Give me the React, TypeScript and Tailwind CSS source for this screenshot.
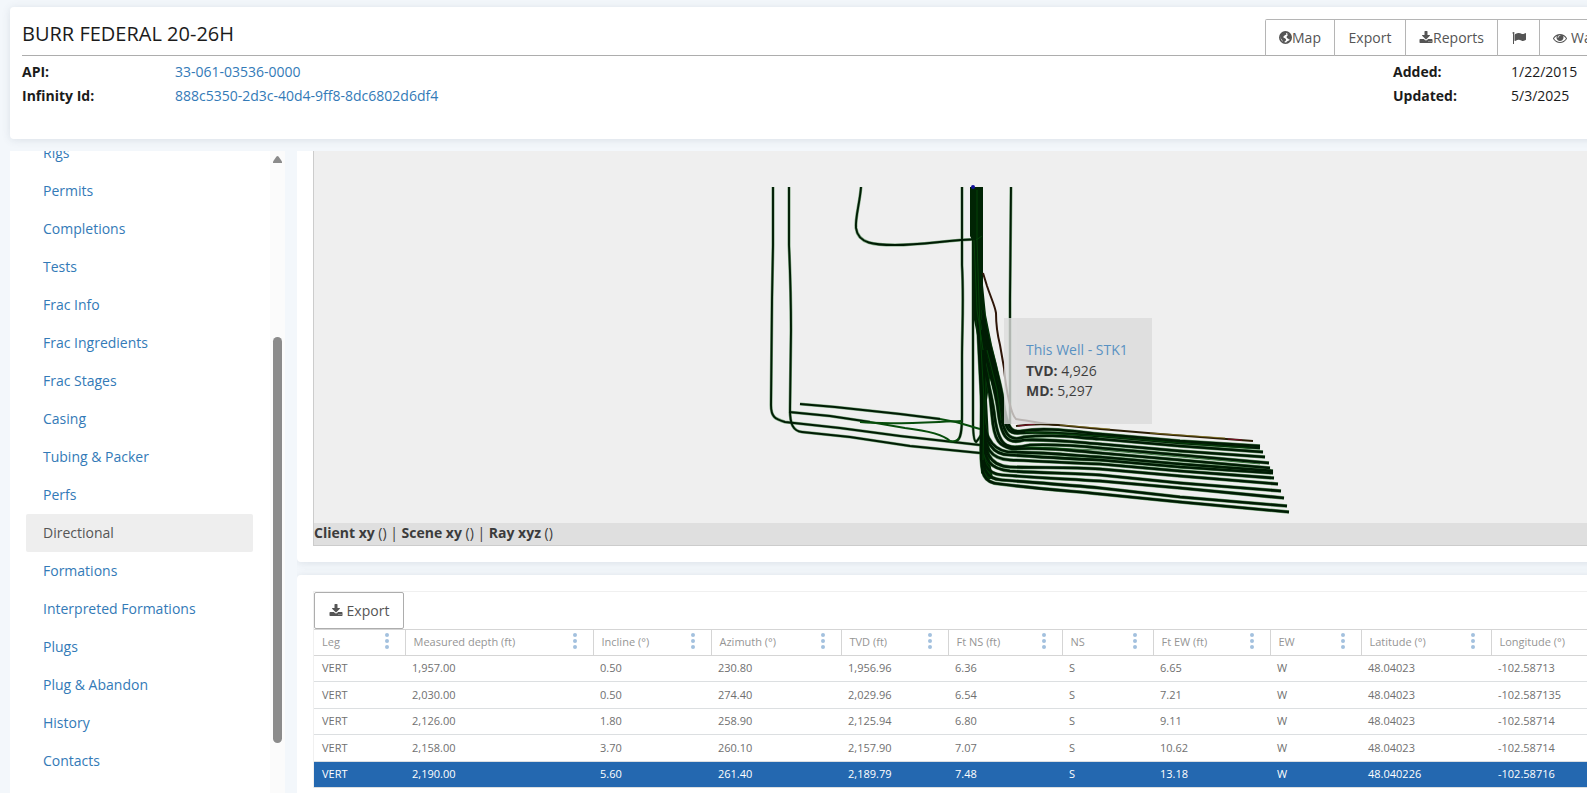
import type { ReactNode } from "react";

const navItems = [
  "Rigs",
  "Permits",
  "Completions",
  "Tests",
  "Frac Info",
  "Frac Ingredients",
  "Frac Stages",
  "Casing",
  "Tubing & Packer",
  "Perfs",
  "Directional",
  "Formations",
  "Interpreted Formations",
  "Plugs",
  "Plug & Abandon",
  "History",
  "Contacts",
];

const columns = [
  { label: "Leg", width: "w-[91px]" },
  { label: "Measured depth (ft)", width: "w-[188px]" },
  { label: "Incline (°)", width: "w-[118px]" },
  { label: "Azimuth (°)", width: "w-[130px]" },
  { label: "TVD (ft)", width: "w-[107px]" },
  { label: "Ft NS (ft)", width: "w-[114px]" },
  { label: "NS", width: "w-[91px]" },
  { label: "Ft EW (ft)", width: "w-[117px]" },
  { label: "EW", width: "w-[91px]" },
  { label: "Latitude (°)", width: "w-[130px]" },
  { label: "Longitude (°)", width: "w-auto" },
];

const rows = [
  ["VERT", "1,957.00", "0.50", "230.80", "1,956.96", "6.36", "S", "6.65", "W", "48.04023", "-102.58713"],
  ["VERT", "2,030.00", "0.50", "274.40", "2,029.96", "6.54", "S", "7.21", "W", "48.04023", "-102.587135"],
  ["VERT", "2,126.00", "1.80", "258.90", "2,125.94", "6.80", "S", "9.11", "W", "48.04023", "-102.58714"],
  ["VERT", "2,158.00", "3.70", "260.10", "2,157.90", "7.07", "S", "10.62", "W", "48.04023", "-102.58714"],
  ["VERT", "2,190.00", "5.60", "261.40", "2,189.79", "7.48", "S", "13.18", "W", "48.040226", "-102.58716"],
];

function Icon({ children }: { children: ReactNode }) {
  return (
    <svg width="14" height="14" viewBox="0 0 1792 1792" fill="currentColor" aria-hidden="true" className="shrink-0">
      {children}
    </svg>
  );
}

function DownloadIcon() {
  return (
    <Icon>
      <path d="M1344 1344q0-26-19-45t-45-19-45 19-19 45 19 45 45 19 45-19 19-45zm256 0q0-26-19-45t-45-19-45 19-19 45 19 45 45 19 45-19 19-45zm128-224v320q0 40-28 68t-68 28h-1472q-40 0-68-28t-28-68v-320q0-40 28-68t68-28h465l135 136q58 56 136 56t136-56l136-136h464q40 0 68 28t28 68zm-325-569q17 41-14 70l-448 448q-18 19-45 19t-45-19l-448-448q-31-29-14-70 17-39 59-39h256v-448q0-26 19-45t45-19h256q26 0 45 19t19 45v448h256q42 0 59 39z" />
    </Icon>
  );
}

function FlagIcon() {
  return (
    <Icon>
      <path d="M320 256q0 72-64 110v1266q0 13-9.500 22.500t-22.500 9.500h-64q-13 0-22.500-9.500t-9.500-22.500v-1266q-64-38-64-110 0-53 37.500-90.500t90.500-37.500 90.500 37.500 37.500 90.500zm1472 64v763q0 25-12.500 38.500t-39.500 27.500q-215 116-369 116-61 0-123.500-22t-108.500-48-115.500-48-142.500-22q-192 0-464 146-17 9-33 9-26 0-45-19t-19-45v-742q0-32 31-55 21-14 79-43 236-120 421-120 107 0 200 29t219 88q38 19 88 19 54 0 117.500-21t110-47 88-47 54.500-21q26 0 45 19t19 45z" />
    </Icon>
  );
}

function EyeIcon() {
  return (
    <Icon>
      <path d="M1664 960q-152-236-381-353 61 104 61 225 0 185-131.500 316.500t-316.500 131.500-316.500-131.500-131.500-316.500q0-121 61-225-229 117-381 353 133 205 333.500 326.500t434.500 121.500 434.500-121.500 333.500-326.500zm-720-384q0-20-14-34t-34-14q-125 0-214.500 89.500t-89.500 214.500q0 20 14 34t34 14 34-14 14-34q0-86 61-147t147-61q20 0 34-14t14-34zm848 384q0 34-20 69-140 230-376.500 368.500t-499.500 138.500-499.500-139-376.500-368q-20-35-20-69t20-69q140-229 376.500-368t499.500-139 499.500 139 376.500 368q20 35 20 69z" />
    </Icon>
  );
}

function GlobeIcon() {
  return (
    <svg width="13" height="13" viewBox="0 0 24 24" aria-hidden="true" className="shrink-0">
      <circle cx="12" cy="12" r="10.500" fill="none" stroke="currentColor" strokeWidth="3" />
      <path
        fill="currentColor"
        d="M2 9 C3 5 6 2 10 1.500 L15 2 L13 4 L14 6 L11 8 L8.500 9.500 L8 12 L11 13.500 L13 15 L12.500 18 L10 20 L10 22 C7 21 7 19 6 17 L3 13 Z M15 3 L20 5 L22.500 10 L22 14 L19 16 L17 14.500 L14.500 13 L14 10.500 L16 8.500 Z M14 20 L19 17 L20 19 L15 22.500 Z"
      />
    </svg>
  );
}

const offsetWells = [
  "M773 187 L773 245 L772 300 L771 405 C771 417 775 419 785 422 L840 428 L900 436 L980 445",
  "M789 187 L789 245 C790 270 791 290 791 330 L790 410 C790 424 793 431 802 432 L850 437 L910 446 L980 453",
  "M861 187 C860 202 855 218 856 228 C858 244 875 245 895 245 C925 245 945 240 980 239",
  "M962 187 L962 265 C964 300 962 330 962 360 L962 415 C962 430 961 440 956 441",
  "M973 187 L973 420 C973 436 974 441 976 442 C979 439 980 436 982 434",
  "M1011 187 L1010 300 L1010 424",
  "M800 404 L835 407 L900 414 L940 419",
  "M789 412 L830 416 L870 422",
];

const thinWells = [
  "M940 419 C960 422 965 425 980 429",
  "M860 422 C890 425 930 422 962 421",
  "M870 422 L905 428 C930 431 945 436 950 441 C953 442 958 441 959 438",
];

// laterals fanning east of the pad, shallowest first
const laterals = [
  "M983 310 C987 345 1000 375 1003 400 C1007 430 1012 433 1022 431 C1045 427 1070 431 1100 434 L1180 441 L1260 446",
  "M983 315 C987 350 998 380 1001 402 C1005 432 1010 434 1020 433 C1045 431 1070 434 1100 436 L1180 443 L1260 448",
  "M982 320 C986 355 996 380 999 405 C1003 436 1010 442 1024 437 C1050 434 1070 437 1100 439 L1180 446 L1263 452",
  "M982 330 C984 360 994 380 998 410 C1001 438 1008 445 1024 440 C1050 439 1075 442 1100 444 L1180 451 L1265 457",
  "M981 340 C984 370 991 390 994 412 C998 448 1006 450 1030 445 C1060 444 1080 446 1100 448 L1180 455 L1269 463",
  "M980 345 C985 365 990 390 992 415 C994 442 1000 446 1012 449 C1040 447 1070 450 1100 453 L1180 460 L1270 468",
  "M978 320 L982 400 C983 435 990 449 1008 452 C1040 452 1070 455 1100 457 L1180 464 L1273 471",
  "M978 330 L982 410 C984 444 993 455 1010 455 C1040 457 1070 459 1100 460 L1180 467 L1273 473",
  "M982 350 L983 420 C984 450 991 459 1010 460 C1040 461 1070 463 1100 464 L1180 471 L1274 478",
  "M983 350 L983 420 C983 450 988 466 1010 467 C1040 468 1070 467 1100 469 L1180 476 L1278 484",
  "M985 350 L983 430 C983 462 990 469 1010 471 C1040 473 1070 473 1100 475 L1180 483 L1281 491",
  "M984 350 L982 440 C981 462 986 474 1002 475 C1040 478 1070 479 1100 481 L1180 488 L1284 498",
  "M983 350 L982 440 C982 470 985 479 1002 480 C1040 483 1070 485 1100 488 L1180 497 L1287 506",
  "M982 350 L981 450 C981 474 983 483 1000 484 C1040 489 1070 491 1100 494 L1180 502 L1289 512",
];

function WellPaths() {
  return (
    <svg
      width="1000"
      height="372"
      viewBox="314 151 1000 372"
      fill="none"
      aria-label="Directional survey"
      role="img"
      className="block max-w-none"
    >
      <g stroke="#0b5f12" strokeWidth="3" opacity="0.5">
        {offsetWells.map((d) => (
          <path key={d} d={d} />
        ))}
      </g>
      <g stroke="#001c04" strokeWidth="1.900">
        {offsetWells.map((d) => (
          <path key={d} d={d} />
        ))}
      </g>
      <g stroke="#064d0b" strokeWidth="2">
        {thinWells.map((d) => (
          <path key={d} d={d} />
        ))}
      </g>
      <path
        fill="#002404"
        d="M970 187 H983 V285 L986 315 L992 345 L997 365 L1001 385 L1006 424 H1002 L990 378 L987 400 L989 440 L990 462 L993 478 L988 480 L981 473 L980 440 V350 L974 320 L972 240 L970 236 Z"
      />
      <g stroke="#0a5a10" strokeWidth="3.600" opacity="0.6">
        {laterals.map((d) => (
          <path key={d} d={d} />
        ))}
      </g>
      <g stroke="#001c04" strokeWidth="2.600">
        {laterals.map((d) => (
          <path key={d} d={d} />
        ))}
      </g>
      <g stroke="#07500c" strokeWidth="1" opacity="0.7">
        <path d="M977 190 V240 L980 330 L984 400 L983 460" />
        <path d="M974 240 L977 310 L983 350" />
        <path d="M976 240 L982 236" />
        <path d="M987 350 L997 390 L1001 420" />
        <path d="M1025 432 L1100 436 L1180 443 L1250 448" />
        <path d="M1025 447 L1100 450 L1180 457 L1260 464" />
      </g>
      <path
        stroke="#2e1508"
        strokeWidth="2"
        d="M983 273 L987 286 C991 298 995 306 996 313 C996 325 997 333 1000 345 L1004 368 C1006 390 1011 415 1016 419 C1030 421 1045 424 1058 425"
      />
      <path stroke="#2a1d04" strokeWidth="2" d="M1016 426 C1030 424 1045 424 1058 425 L1100 429 L1160 434 L1253 441" />
      <path stroke="#8a7a20" strokeWidth="1" opacity="0.7" d="M1060 425 L1110 429 M1150 433 L1225 438" />
      <path stroke="#7a1028" strokeWidth="1" d="M1018 426 L1035 424 M1228 439 L1242 440" />
      <circle cx="973" cy="187" r="2" fill="#10109a" />
    </svg>
  );
}

function ColumnMenu({ label }: { label: string }) {
  return (
    <button type="button" aria-label={label + " menu"} className="mr-4 shrink-0 text-[#a3c1de]">
      <svg width="4" height="16" viewBox="0 0 4 16" fill="currentColor">
        <circle cx="2" cy="2" r="2" />
        <circle cx="2" cy="8" r="2" />
        <circle cx="2" cy="14" r="2" />
      </svg>
    </button>
  );
}

function Header() {
  const btn = "flex h-full items-center border-l border-[#b5b5b5]";
  return (
    <header className="h-[132px] shrink-0 rounded bg-white px-3 pt-3 shadow-[0_1px_8px_rgba(60,80,100,0.13)]">
      <div className="flex h-[37px] items-center justify-between border-b border-[#adadad]">
        <h1 className="mb-1.5 text-[20px] leading-6 text-[#1b1b1b]">BURR FEDERAL 20-26H</h1>
        <div className="flex h-[37px] overflow-hidden rounded-t-xs border-t border-r border-[#b5b5b5] text-[#555]">
          <button type="button" className={btn + " w-[69px] justify-center"}>
            <GlobeIcon />
            Map
          </button>
          <button type="button" className={btn + " w-[71px] justify-center"}>
            Export
          </button>
          <button type="button" className={btn + " w-[92px] justify-center"}>
            <DownloadIcon />
            Reports
          </button>
          <button type="button" aria-label="Flag" className={btn + " w-[42px] justify-center"}>
            <FlagIcon />
          </button>
          <button type="button" className={btn + " w-[89px] gap-1 pl-[13px]"}>
            <EyeIcon />
            Watch
          </button>
        </div>
      </div>
      <div className="flex justify-between pt-1 leading-6 text-[#1b1b1b]">
        <dl className="grid grid-cols-[153px_auto]">
          <dt className="font-bold">API:</dt>
          <dd>
            <a href="#api" className="text-[#337ab7]">
              33-061-03536-0000
            </a>
          </dd>
          <dt className="font-bold">Infinity Id:</dt>
          <dd>
            <a href="#infinity" className="text-[#337ab7]">
              888c5350-2d3c-40d4-9ff8-8dc6802d6df4
            </a>
          </dd>
        </dl>
        <dl className="grid grid-cols-[118px_118px]">
          <dt className="font-bold">Added:</dt>
          <dd>1/22/2015</dd>
          <dt className="font-bold">Updated:</dt>
          <dd>5/3/2025</dd>
        </dl>
      </div>
    </header>
  );
}

function Sidebar() {
  return (
    <aside className="flex w-[275px] shrink-0 overflow-hidden bg-white">
      <nav className="-mt-[17px] flex-1 pr-[17px] pl-4">
        {navItems.map((item) => (
          <a
            key={item}
            href={"#" + item}
            className={
              item === "Directional"
                ? "block h-[38px] rounded-xs bg-[#eee] px-[17px] leading-[38px] text-[#555]"
                : "block h-[38px] px-[17px] leading-[38px] text-[#337ab7]"
            }
          >
            {item}
          </a>
        ))}
      </nav>
      <div className="flex w-[15px] flex-col items-center bg-[#fbfbfb] pt-[5px]">
        <svg width="9" height="7" viewBox="0 0 9 7" fill="#8b8b8b">
          <path d="M3.500 0.500 Q4.500 -0.500 5.500 0.500 L9 5.500 V7 H0 V5.500 Z" />
        </svg>
        <div className="mt-[174px] h-[406px] w-[9px] rounded-full bg-[#8b8b8b]" />
      </div>
    </aside>
  );
}

function Viewer() {
  return (
    <section className="h-[411px] shrink-0 rounded-b bg-white px-4 pb-4 shadow-[0_1px_8px_rgba(60,80,100,0.13)]">
      <div className="border-b border-l border-[#ccc] bg-[#efefef] text-[#3c3c3c]">
        <div className="relative overflow-hidden">
          <WellPaths />
          <div className="absolute top-[167px] left-[690px] h-[106px] w-[148px] bg-[#dcdcdc] px-[22px] pt-[22px] leading-5 text-[#111] opacity-80">
            <a href="#well" className="mb-px block text-[#337ab7]">
              This Well - STK1
            </a>
            <p>
              <b>TVD:</b> 4,926
            </p>
            <p>
              <b>MD:</b> 5,297
            </p>
          </div>
        </div>
        <p className="h-[22px] bg-[#dfdfdf] leading-5">
          <b>Client xy</b> () | <b>Scene xy</b> () | <b>Ray xyz</b> ()
        </p>
      </div>
    </section>
  );
}

function SurveyGrid() {
  return (
    <section className="flex-1 rounded-t bg-white px-4 pt-4 shadow-[0_1px_8px_rgba(60,80,100,0.13)]">
      <div className="border-t border-l border-[#f0f0f0]">
        <button
          type="button"
          className="flex h-[37px] w-[90px] items-center justify-center gap-1 rounded-xs border border-[#adadad] bg-white text-[#555]"
        >
          <DownloadIcon />
          Export
        </button>
        <table className="w-full table-fixed border-collapse text-left text-[11px] leading-4 text-[#707070]">
          <thead>
            <tr className="h-[26px] border-y border-[#d5d5d5] text-[#959595]">
              {columns.map((c) => (
                <th key={c.label} className={"border-r border-[#d5d5d5] p-0 pb-1 pl-2 font-normal " + c.width}>
                  <div className="flex items-end justify-between">
                    <span className="-mb-px">{c.label}</span>
                    <ColumnMenu label={c.label} />
                  </div>
                </th>
              ))}
            </tr>
          </thead>
          <tbody>
            {rows.map((row, i) => (
              <tr
                key={row[1]}
                className={
                  i === 4
                    ? "h-[26px] border-b border-[#dcdfe1] bg-[#2468b0] text-white"
                    : "border-b border-[#dcdfe1] odd:h-[26px] even:h-[27px]"
                }
              >
                {row.map((cell, j) => (
                  <td key={j} className="p-0 pb-px pl-[7px] first:pl-2">
                    {cell}
                  </td>
                ))}
              </tr>
            ))}
          </tbody>
        </table>
      </div>
    </section>
  );
}

export default function App() {
  return (
    <div className="h-screen overflow-hidden bg-[#f3f7fb] font-['Open_Sans','Noto_Sans',sans-serif] text-sm">
      <div className="flex h-full w-[calc(100%+64px)] flex-col gap-3 px-[10px] pt-[7px]">
        <Header />
        <div className="flex min-h-0 flex-1 gap-3">
          <Sidebar />
          <main className="flex min-w-0 flex-1 flex-col gap-[13px] overflow-hidden">
            <Viewer />
            <SurveyGrid />
          </main>
        </div>
      </div>
    </div>
  );
}
